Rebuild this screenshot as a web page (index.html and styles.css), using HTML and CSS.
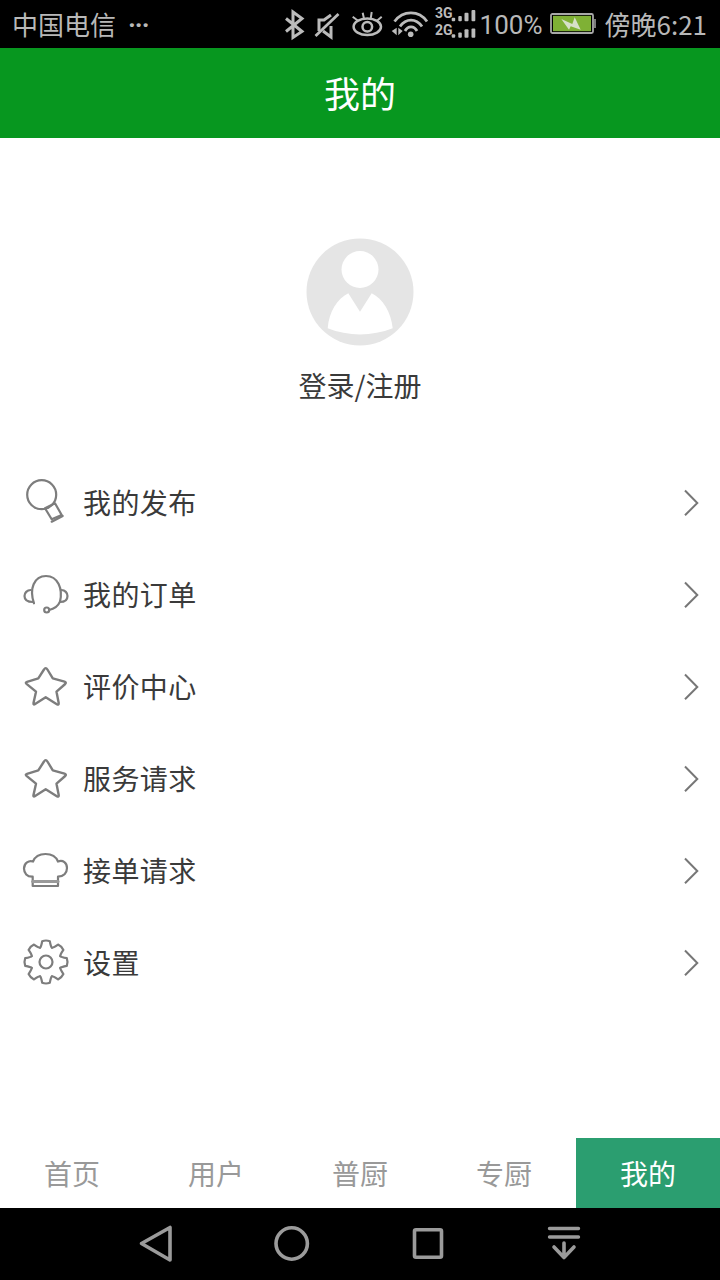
FILE: index.html
```html
<!DOCTYPE html>
<html lang="zh-CN">
<head>
<meta charset="utf-8">
<title>我的</title>
<link rel="stylesheet" href="styles.css">
</head>
<body>
<div class="app">
  <div class="statusbar">
    <div class="status-left"><span class="status-text">中国电信</span><span class="dots">···</span></div>
    <div class="status-right">
      <svg class="status-icons" width="192" height="48" viewBox="284 0 192 48" fill="none" stroke="#bbb" stroke-width="2.5">
        <path d="M286 18.500 L302 31.500 L293 37.500 V12 L302 18.500 L286 31.500" stroke-width="3"/>
        <path d="M319 31 V20 H324 L331 15 M331 26 V37 L323 31" stroke-width="3"/>
        <path d="M315.500 36 L338.500 14" stroke-width="2.800"/>
        <ellipse cx="367.300" cy="26.700" rx="13.700" ry="8.300"/>
        <circle cx="367.300" cy="26.700" r="4.800"/>
        <path d="M352.700 16.700 L358.300 21 M362.700 12.700 L364 18.700 M371.700 12 L370.700 18.700 M381.700 16.700 L376.700 21" stroke-width="2"/>
        <path d="M394.500 21.500 C403 10 419 10 427 21.500 M400 26.500 C406 18 416 18 422 26.500 M405 31 C408 25.500 414 25.500 417 31" stroke-width="2.800"/>
        <circle cx="410.700" cy="34.300" r="2.800" fill="#bbb" stroke="none"/>
        <path d="M391.700 31 L396.700 27.700 V35.300 Z M398.300 27.700 V35.300 L402.700 31 Z" fill="#bbb" stroke="none"/>
        <text x="435" y="18" class="net-text">3G</text>
        <text x="435" y="35" class="net-text">2G</text>
        <g fill="#bbb" stroke="none">
          <rect x="451.700" y="17.700" width="3.500" height="3.500" rx="1"/><rect x="458.300" y="16" width="3.500" height="5.200" rx="1"/><rect x="464.500" y="12.700" width="4" height="8.500" rx="1"/><rect x="471.500" y="10" width="3.800" height="11.200" rx="1"/>
          <rect x="451.700" y="34.300" width="3.500" height="3.500" rx="1"/><rect x="458.300" y="32.500" width="3.500" height="5.300" rx="1"/><rect x="464.500" y="29.300" width="4" height="8.500" rx="1"/><rect x="471.500" y="28.500" width="3.800" height="9.300" rx="1"/>
        </g>
      </svg>
      <span class="pct">100%</span>
      <svg class="battery" width="46" height="22" viewBox="0 0 46 22">
        <rect x="1" y="1" width="42" height="19" rx="1.500" fill="none" stroke="#a8a8a8" stroke-width="1.800"/>
        <rect x="3" y="2.800" width="38" height="15.400" fill="#7fb135"/>
        <rect x="44" y="6" width="2" height="9" fill="#7a7a7a"/>
        <path d="M11.300 6 L22.300 11 L24.700 4.300 L30.700 16.700 L20.700 13.300 L19 16.700 Z" fill="#d6e0c8"/>
      </svg>
      <span class="status-text time">傍晚6:21</span>
    </div>
  </div>

  <header class="titlebar"><span class="title-text">我的</span></header>

  <main class="content">
    <section class="profile">
      <svg class="avatar" width="108" height="108" viewBox="0 0 108 108">
        <circle cx="54" cy="54" r="53.500" fill="#e5e5e5"/>
        <circle cx="54" cy="31.500" r="18.500" fill="#fff"/>
        <path d="M21.700 90.300 C23 74 31 61 42.300 55.300 L54 73.700 L65.700 55.300 C77 61 85 74 86.700 90.300 C66 98.500 42 98.500 21.700 90.300 Z" fill="#fff"/>
      </svg>
      <div class="login">登录/注册</div>
    </section>

    <ul class="menu">
      <li class="row">
        <svg class="icon" width="48" height="48" viewBox="0 0 48 48">
          <circle cx="19.700" cy="15.700" r="14.500"/>
          <path d="M23 29.300 L33 24.300 L39.700 36 L29.700 40.300 Z"/>
          <path d="M29.700 42.700 L40.700 37"/>
        </svg>
        <span class="label">我的发布</span>
        <svg class="chev" width="16" height="28" viewBox="0 0 16 28"><path d="M2 1.500 L14.300 14 L2 26.300"/></svg>
      </li>
      <li class="row">
        <svg class="icon" width="48" height="48" viewBox="0 0 48 48">
          <path d="M12 32.300 C7 18 12 5 24 5 C36 5 41 18 38 30.700"/>
          <path d="M8.700 19 C5 19 2.500 22 2.500 25 C2.500 28.500 5 31 11 31"/>
          <path d="M39.500 19 C43 19 45.500 22 45.500 25 C45.500 28.500 43 31 38 31"/>
          <path d="M38 30.700 C36 35.500 32 38 27 39"/>
          <circle cx="24.700" cy="39" r="2.500"/>
        </svg>
        <span class="label">我的订单</span>
        <svg class="chev" width="16" height="28" viewBox="0 0 16 28"><path d="M2 1.500 L14.300 14 L2 26.300"/></svg>
      </li>
      <li class="row">
        <svg class="icon star" width="48" height="48" viewBox="0 0 48 48">
          <path d="M22 6.500 Q23.700 3.700 25.400 6.500 L30.800 15.300 L42.500 18.700 Q44.700 19.500 43.200 21 L34.500 28.700 L36.700 40 Q37 42.500 34.800 41.200 L23.700 34.300 L13.500 40.700 Q11 42.500 11.500 40 L14 28.700 L4.500 20.800 Q3 19.500 5 18.900 L16.300 15.300 Z"/>
        </svg>
        <span class="label">评价中心</span>
        <svg class="chev" width="16" height="28" viewBox="0 0 16 28"><path d="M2 1.500 L14.300 14 L2 26.300"/></svg>
      </li>
      <li class="row">
        <svg class="icon star" width="48" height="48" viewBox="0 0 48 48">
          <path d="M22 6.500 Q23.700 3.700 25.400 6.500 L30.800 15.300 L42.500 18.700 Q44.700 19.500 43.200 21 L34.500 28.700 L36.700 40 Q37 42.500 34.800 41.200 L23.700 34.300 L13.500 40.700 Q11 42.500 11.500 40 L14 28.700 L4.500 20.800 Q3 19.500 5 18.900 L16.300 15.300 Z"/>
        </svg>
        <span class="label">服务请求</span>
        <svg class="chev" width="16" height="28" viewBox="0 0 16 28"><path d="M2 1.500 L14.300 14 L2 26.300"/></svg>
      </li>
      <li class="row">
        <svg class="icon" width="48" height="48" viewBox="0 0 48 48">
          <path d="M10.700 29.700 C5 30 2 26 2 21.500 C2 16 7 13 11 14.500 C13 9.500 18 7 23.500 7 C29 7 34 9.500 36 14.500 C41 12.500 45 16 45 21 C45 26 41.500 29.700 36 29.700 V39 H10.700 Z"/>
          <path d="M10.700 34.500 H36" class="thick"/>
        </svg>
        <span class="label">接单请求</span>
        <svg class="chev" width="16" height="28" viewBox="0 0 16 28"><path d="M2 1.500 L14.300 14 L2 26.300"/></svg>
      </li>
      <li class="row">
        <svg class="icon" width="48" height="48" viewBox="0 0 48 48">
          <defs><path id="tooth" d="M-5.900 -14.300 C-5 -15 -4.500 -17 -3.800 -20.800 Q0 -22.200 3.800 -20.800 C4.500 -17 5 -15 5.900 -14.300"/></defs>
          <g transform="translate(24 23)">
            <use href="#tooth"/>
            <use href="#tooth" transform="rotate(45)"/>
            <use href="#tooth" transform="rotate(90)"/>
            <use href="#tooth" transform="rotate(135)"/>
            <use href="#tooth" transform="rotate(180)"/>
            <use href="#tooth" transform="rotate(225)"/>
            <use href="#tooth" transform="rotate(270)"/>
            <use href="#tooth" transform="rotate(315)"/>
            <circle r="6.500"/>
          </g>
        </svg>
        <span class="label">设置</span>
        <svg class="chev" width="16" height="28" viewBox="0 0 16 28"><path d="M2 1.500 L14.300 14 L2 26.300"/></svg>
      </li>
    </ul>
  </main>

  <nav class="tabs">
    <div class="tab">首页</div>
    <div class="tab">用户</div>
    <div class="tab">普厨</div>
    <div class="tab">专厨</div>
    <div class="tab active">我的</div>
  </nav>

  <div class="navbar">
    <svg width="720" height="72" viewBox="0 1208 720 72" fill="none" stroke="#9b9b9b" stroke-width="3.600" stroke-linejoin="round" stroke-linecap="round">
      <path d="M141.500 1243.500 L170 1227.500 V1260 Z"/>
      <circle cx="291.700" cy="1243.500" r="15.700"/>
      <rect x="414.500" y="1229.800" width="27" height="27.500" rx="1.500"/>
      <path d="M549.500 1228.500 H578.500 M549.500 1237 H578.500" stroke-width="3.400"/>
      <path d="M564 1243 V1257 M554 1247 L564 1257.500 L574 1247"/>
    </svg>
  </div>
</div>
</body>
</html>
```
FILE: styles.css
```css
* { box-sizing: border-box; }
html, body { margin: 0; padding: 0; background: #fff; }
body { font-family: "Noto Sans CJK SC", "Noto Sans", sans-serif; }

.app { width: 720px; height: 1280px; display: flex; flex-direction: column; overflow: hidden; }

.statusbar { height: 48px; flex: none; background: #000; color: #b8b8b8; font-size: 26px; display: flex; justify-content: space-between; align-items: center; padding: 0 13px 0 12px; }
.status-left { display: flex; align-items: center; gap: 12px; }
.status-text { padding-bottom: 2px; }
.dots { font-family: "Roboto", sans-serif; font-weight: 700; letter-spacing: -1px; padding-top: 2px; }
.status-right { display: flex; align-items: center; }
.status-icons { display: block; }
.net-text { font-family: "Roboto", sans-serif; font-size: 14px; font-weight: 700; fill: #bbb; stroke: none; }
.pct { font-family: "Roboto", sans-serif; margin-left: 4px; padding-top: 2px; }
.battery { display: block; margin-left: 8px; }
.time { margin-left: 8px; }

.titlebar { height: 90px; flex: none; background: #07971f; color: #fff; font-size: 36px; display: flex; align-items: center; justify-content: center; }
.title-text { padding-bottom: 2px; }

.content { flex: 1; min-height: 0; display: flex; flex-direction: column; }
.profile { display: flex; flex-direction: column; align-items: center; padding-top: 100px; }
.avatar { display: block; }
.login { margin-top: 20px; height: 40px; line-height: 38px; font-size: 28px; color: #3a3a3a; }

.menu { list-style: none; margin: 51px 0 0; padding: 0; }
.row { height: 92px; display: flex; align-items: center; padding: 0 21px 0 22px; }
.icon { flex: none; fill: none; stroke: #7d7d7d; stroke-width: 2.2; stroke-linejoin: round; stroke-linecap: round; }
.star { stroke-width: 2.4; }
.thick { stroke-width: 3; stroke: #9a9a9a; }
.label { margin-left: 14px; padding-bottom: 2px; flex: 1; font-size: 28px; letter-spacing: 0.4px; color: #3a3a3a; transform: translateX(-1px); }
.chev { flex: none; fill: none; stroke: #777; stroke-width: 2; }

.tabs { height: 70px; flex: none; display: flex; background: #fff; }
.tab { flex: 1; display: flex; align-items: center; justify-content: center; font-size: 28px; color: #999; padding-bottom: 1px; }
.tab.active { background: #2b9e70; color: #fff; }

.navbar { height: 72px; flex: none; background: #000; }
.navbar svg { display: block; }
```
